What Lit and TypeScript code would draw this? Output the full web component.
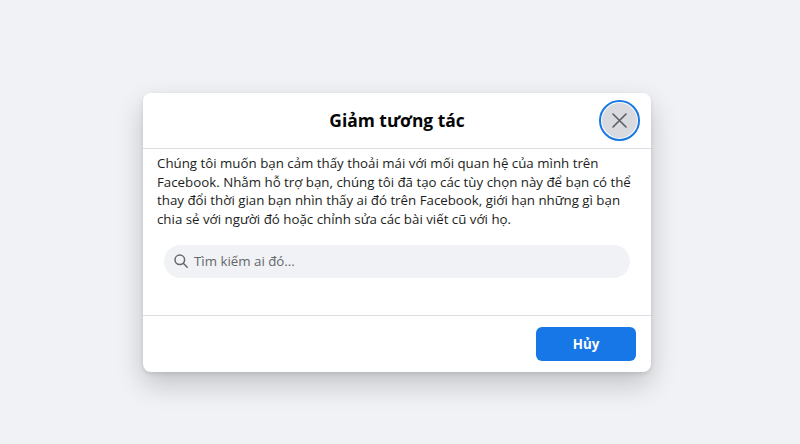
import { LitElement, html, css } from "lit";
import { customElement } from "lit/decorators.js";

@customElement("app-root")
export class AppRoot extends LitElement {
  static styles = css`
    :host {
      display: flex;
      width: 800px;
      height: 444px;
      align-items: flex-start;
      justify-content: center;
      background: #f0f2f5;
      font-family: "Open Sans", "Noto Sans", sans-serif;
      color: #050505;
      overflow: hidden;
    }
    .modal {
      box-sizing: border-box;
      width: 508px;
      height: 279px;
      margin-top: 93px;
      margin-left: -6px;
      background: #fff;
      border-radius: 8px;
      box-shadow: 0 12px 28px 0 rgba(0, 0, 0, 0.2), 0 2px 4px 0 rgba(0, 0, 0, 0.1);
      display: flex;
      flex-direction: column;
    }
    .head {
      position: relative;
      height: 56px;
      box-sizing: border-box;
      padding-bottom: 1px;
      border-bottom: 1px solid #dadde1;
      display: flex;
      align-items: center;
      justify-content: center;
      flex: none;
    }
    h2 {
      margin: 0;
      font-size: 17.4px;
      font-weight: 700;
      line-height: 24px;
      color: #050505;
    }
    .close {
      position: absolute;
      right: 14px;
      top: 10px;
      width: 35px;
      height: 35px;
      box-sizing: border-box;
      border-radius: 50%;
      border: none;
      padding: 0;
      background: #d8dadf;
      outline: 2px solid #1877e0;
      outline-offset: 1px;
      display: flex;
      align-items: center;
      justify-content: center;
    }
    .body {
      padding: 5px 14px 0;
      flex: 1;
    }
    p {
      margin: 0;
      font-size: 13.3px;
      line-height: 18.67px;
      color: #1c1e21;
      white-space: nowrap;
    }
    .search {
      margin: 16px 7px 0;
      width: 466px;
      height: 33px;
      border-radius: 17px;
      background: #f0f2f5;
      display: flex;
      align-items: center;
      gap: 6px;
      padding-left: 10px;
      box-sizing: border-box;
      font-size: 13.3px;
      color: #65676b;
    }
    .foot {
      flex: none;
      height: 57px;
      box-sizing: border-box;
      border-top: 1px solid #dadde1;
      display: flex;
      justify-content: flex-end;
      align-items: flex-start;
      padding: 11px 15px 0;
    }
    .btn {
      width: 100px;
      height: 34px;
      border: none;
      border-radius: 6px;
      background: #1877e6;
      color: #fff;
      font: 700 13.3px "Open Sans", "Noto Sans", sans-serif;
      padding: 0;
    }
  `;

  render() {
    return html`
      <div class="modal">
        <div class="head">
          <h2>Giảm tương tác</h2>
          <button class="close" aria-label="Đóng">
            <svg width="15" height="15" viewBox="0 0 15 15" fill="none" stroke="#5b5e64" stroke-width="1.6" stroke-linecap="round">
              <path d="M1 1 14 14M14 1 1 14" />
            </svg>
          </button>
        </div>
        <div class="body">
          <p>Chúng tôi muốn bạn cảm thấy thoải mái với mối quan hệ của mình trên<br />Facebook. Nhằm hỗ trợ bạn, chúng tôi đã tạo các tùy chọn này để bạn có thể<br />thay đổi thời gian bạn nhìn thấy ai đó trên Facebook, giới hạn những gì bạn<br />chia sẻ với người đó hoặc chỉnh sửa các bài viết cũ với họ.</p>
          <div class="search">
            <svg width="14" height="14" viewBox="0 0 14 14" fill="none" stroke="#65676b" stroke-width="1.5" stroke-linecap="round">
              <circle cx="5.8" cy="5.8" r="4.8" />
              <path d="M9.3 9.3 13.2 13.2" />
            </svg>
            <span>Tìm kiếm ai đó...</span>
          </div>
        </div>
        <div class="foot"><button class="btn">Hủy</button></div>
      </div>
    `;
  }
}
